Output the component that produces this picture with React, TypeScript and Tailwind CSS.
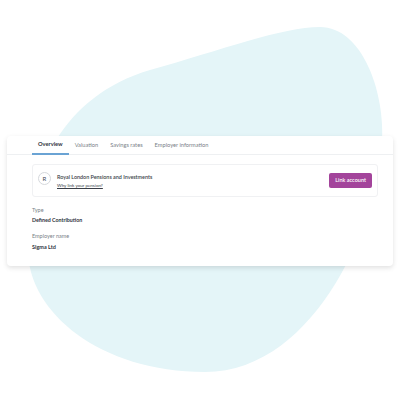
import React from "react";

const tabs = ["Overview", "Valuation", "Savings rates", "Employer information"];

const Blob: React.FC = () => (
  <svg className="absolute inset-0" width="400" height="400" viewBox="0 0 400 400">
    <path
      d="M320 27 C362 27 386 92 382 145 C380 210 320 372 205 372 C100 372 28 312 28 250 C28 172 62 96 150 70 C222 50 282 27 320 27 Z"
      fill="#e4f5f8"
    />
  </svg>
);

const App: React.FC = () => {
  return (
    <div
      className="relative w-[400px] h-[400px] overflow-hidden bg-white"
      style={{ fontFamily: "Lato, 'Noto Sans', sans-serif" }}
    >
      <Blob />
      <div className="relative pt-[136px] px-[7px]">
        <div className="bg-white rounded-[4px] shadow-[0_2px_5px_rgba(0,0,0,0.12)] h-[130px]">
          <div className="flex pl-[25px] h-[19px] border-b border-[#eef0f2]">
            {tabs.map((tab, i) => (
              <div
                key={tab}
                className={
                  i === 0
                    ? "px-[6px] flex items-center text-[5.7px] font-bold text-[#2f3440] border-b-2 border-[#6aa3d4] -mb-px"
                    : "px-[6px] flex items-center text-[5.7px] text-[#7a7f88]"
                }
              >
                {tab}
              </div>
            ))}
          </div>
          <div className="ml-[25px] mr-[15px] mt-[9px] h-[33px] border border-[#f0f1f3] rounded-[3px] flex items-center pl-[5px] pr-[5px]">
            <div className="w-[13px] h-[13px] rounded-full border border-[#d5d8dc] flex items-center justify-center text-[6px] text-[#4a4f58] mb-[4px]">
              R
            </div>
            <div className="ml-[6px] flex flex-col">
              <span className="text-[5.4px] text-[#3a3f48] leading-[8px] font-semibold">
                Royal London Pensions and Investments
              </span>
              <span className="text-[4.5px] text-[#3a3f48] underline mt-[2px] leading-[6px]">
                Why link your pension?
              </span>
            </div>
            <button className="ml-auto h-[15px] px-[6px] rounded-[2px] bg-[#a3449b] text-white text-[5.5px] font-semibold">
              Link account
            </button>
          </div>
          <div className="pl-[25px] mt-[9px] flex flex-col">
            <span className="text-[5.5px] text-[#7a7f88] leading-[8px]">Type</span>
            <span className="text-[5.3px] text-[#2f3440] font-bold leading-[8px] mt-[2px]">
              Defined Contribution
            </span>
            <span className="text-[5.5px] text-[#7a7f88] leading-[8px] mt-[8px]">Employer name</span>
            <span className="text-[5.5px] text-[#2f3440] font-bold leading-[8px] mt-[3px]">Sigma Ltd</span>
          </div>
        </div>
      </div>
    </div>
  );
};

export default App;
